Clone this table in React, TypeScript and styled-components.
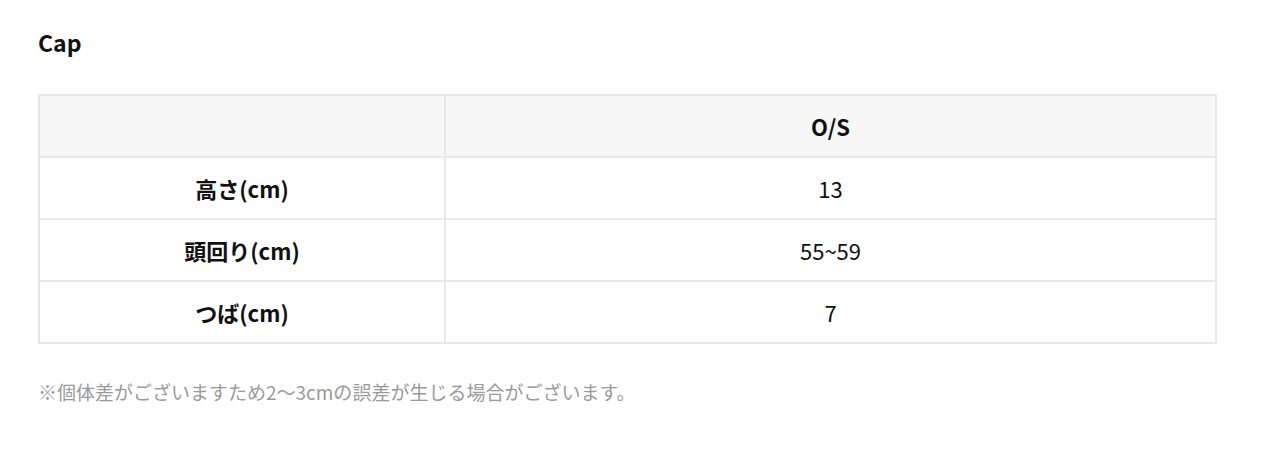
import React from "react";
import styled, { createGlobalStyle } from "styled-components";

const GlobalStyle = createGlobalStyle`
    body {
        margin: 0;
        background: #fff;
        font-family: "Noto Sans CJK JP", "Noto Sans", sans-serif;
        color: #111;
    }
`

const rows = [
    { label: "高さ(cm)", value: "13" },
    { label: "頭回り(cm)", value: "55~59" },
    { label: "つば(cm)", value: "7" },
]

export default function App() {
    return (
        <>
            <GlobalStyle />
            <Page>
                <Title>Cap</Title>
                <SizeTable>
                    <tbody>
                        <tr>
                            <HeadCell $first />
                            <HeadCell>O/S</HeadCell>
                        </tr>
                        {rows.map((row) => (
                            <tr key={row.label}>
                                <LabelCell>{row.label}</LabelCell>
                                <ValueCell>{row.value}</ValueCell>
                            </tr>
                        ))}
                    </tbody>
                </SizeTable>
                <Note>※個体差がございますため2〜3cmの誤差が生じる場合がございます。</Note>
            </Page>
        </>
    )
}

const Page = styled.div`
    padding: 26px 63px 0 38px;
`

const Title = styled.h2`
    margin: 0 0 36px 0;
    font-size: 23px;
    font-weight: 700;
    line-height: 32px;
`

const SizeTable = styled.table`
    width: 100%;
    border-collapse: collapse;
    border: 2px solid #e8e8e8;
`

const Cell = styled.td`
    height: 60px;
    padding: 0;
    border: 2px solid #e8e8e8;
    text-align: center;
    vertical-align: middle;
    font-size: 22px;
    line-height: 30px;
`

const HeadCell = styled(Cell)<{ $first?: boolean }>`
    background: #f7f7f7;
    font-weight: 700;
    width: ${(p) => (p.$first ? "404px" : "auto")};
`

const LabelCell = styled(Cell)`
    font-weight: 700;
`

const ValueCell = styled(Cell)`
    font-weight: 400;
`

const Note = styled.p`
    margin: 34px 0 0 0;
    font-size: 19px;
    line-height: 28px;
    color: #9a9a9a;
`
